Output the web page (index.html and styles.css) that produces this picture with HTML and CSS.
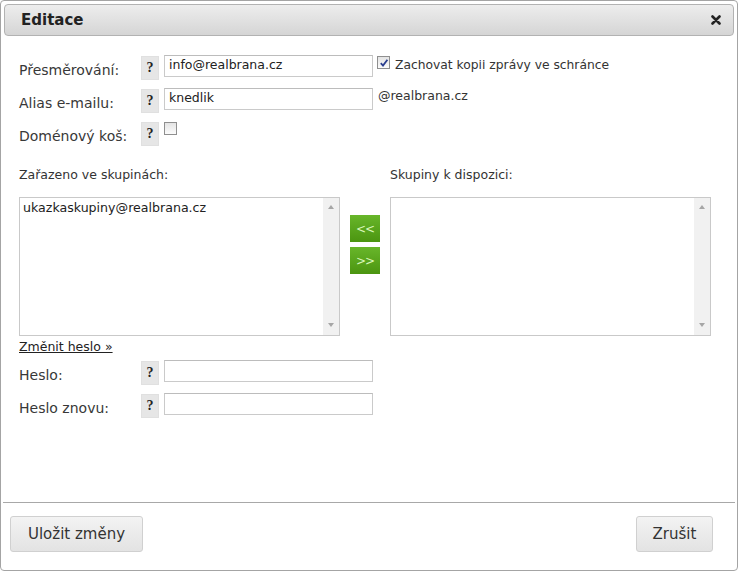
FILE: index.html
```html
<!DOCTYPE html>
<html lang="cs">
<head>
<meta charset="utf-8">
<title>Editace</title>
<link rel="stylesheet" href="styles.css">
</head>
<body>
<div class="dialog">
  <div class="titlebar">
    <span class="title">Editace</span>
    <span class="close"><svg width="10" height="10" viewBox="0 0 10 10"><path d="M1.5 1.5 L8.5 8.5 M8.5 1.5 L1.5 8.5" stroke="#222" stroke-width="2.6" stroke-linecap="round"/></svg></span>
  </div>
  <div class="content">
    <div class="row">
      <span class="label">Přesměrování:</span>
      <span class="help">?</span>
      <span class="input">info@realbrana.cz</span>
      <span class="check checked r1"><svg width="10" height="10" viewBox="0 0 10 10"><path d="M1.8 5.2 L4 7.6 L8.4 1.8" stroke="#2b3f8f" stroke-width="1.8" fill="none"/></svg></span>
      <span class="aside r1t">Zachovat kopii zprávy ve schránce</span>
    </div>
    <div class="row">
      <span class="label">Alias e-mailu:</span>
      <span class="help">?</span>
      <span class="input">knedlik</span>
      <span class="aside r2t">@realbrana.cz</span>
    </div>
    <div class="row">
      <span class="label">Doménový koš:</span>
      <span class="help">?</span>
      <span class="check r3"></span>
    </div>

    <div class="groups">
      <div class="gcol">
        <div class="glabel">Zařazeno ve skupinách:</div>
        <div class="listbox">
          <div class="items"><div class="item">ukazkaskupiny@realbrana.cz</div></div>
          <div class="scroll"><span class="arr up"></span><span class="arr down"></span></div>
        </div>
      </div>
      <div class="moves">
        <span class="move">&lt;&lt;</span>
        <span class="move">&gt;&gt;</span>
      </div>
      <div class="gcol">
        <div class="glabel">Skupiny k dispozici:</div>
        <div class="listbox">
          <div class="items"></div>
          <div class="scroll"><span class="arr up"></span><span class="arr down"></span></div>
        </div>
      </div>
    </div>

    <a class="change" href="#">Změnit heslo »</a>

    <div class="row pw">
      <span class="label">Heslo:</span>
      <span class="help">?</span>
      <span class="input"></span>
    </div>
    <div class="row">
      <span class="label">Heslo znovu:</span>
      <span class="help">?</span>
      <span class="input"></span>
    </div>
  </div>
  <div class="footer">
    <span class="btn save">Uložit změny</span>
    <span class="btn cancel">Zrušit</span>
  </div>
</div>
</body>
</html>
```
FILE: styles.css
```css
* { box-sizing: border-box; }
html, body { margin: 0; padding: 0; background: #fff; }
body { font-family: "DejaVu Sans", Verdana, sans-serif; color: #333; }

.dialog {
  width: 738px;
  height: 571px;
  border: 1px solid #a4a4a4;
  border-radius: 4px;
  display: flex;
  flex-direction: column;
  background: #fff;
}

.titlebar {
  margin: 3px 3px 0 3px;
  height: 32px;
  border: 1px solid #b2b2b2;
  border-radius: 4px;
  background: linear-gradient(#ededed, #d5d5d5);
  display: flex;
  align-items: center;
  justify-content: space-between;
  padding: 0 12px 0 16px;
}
.title { font-weight: bold; font-size: 15px; color: #222; }
.close { display: flex; }

.content {
  padding: 19px 0 0 18px;
  display: flex;
  flex-direction: column;
}

.row {
  display: flex;
  align-items: flex-start;
  height: 33px;
}
.label {
  width: 122px;
  font-size: 14px;
  line-height: 18px;
  margin-top: 6px;
  color: #383838;
}
.help {
  width: 18px;
  height: 24px;
  margin-top: 1px;
  background: #e6e6e6;
  border: 1px solid #e0e0e0;
  font-family: "Liberation Serif", serif;
  font-weight: bold;
  font-size: 14px;
  color: #222;
  display: flex;
  align-items: center;
  justify-content: center;
}
.input {
  width: 209px;
  height: 22px;
  margin-left: 5px;
  border: 1px solid #cacaca;
  border-top-color: #bcbcbc;
  font-size: 12.5px;
  line-height: 18px;
  padding: 0 0 0 4px;
  color: #222;
}
.check {
  width: 13px;
  height: 13px;
  border: 1px solid #8f8f8f;
  background: linear-gradient(#e4e4e4, #fbfbfb);
  display: flex;
  align-items: center;
  justify-content: center;
}
.check.r1 { margin: 1px 0 0 4px; }
.check.r3 { margin: 1px 0 0 5px; }
.aside { color: #333; }
.r1t { margin: 1px 0 0 5px; font-size: 12.3px; line-height: 18px; }
.r2t { margin: 0 0 0 5px; font-size: 12.5px; line-height: 16px; }

.groups {
  display: flex;
  align-items: flex-start;
  margin-top: 13px;
}
.gcol { display: flex; flex-direction: column; }
.glabel { font-size: 12.5px; line-height: 16px; height: 16px; margin-bottom: 14px; color: #333; }
.listbox {
  width: 321px;
  height: 139px;
  border: 1px solid #c9c9c9;
  display: flex;
}
.items { flex: 1; padding: 1px 0 0 3px; }
.item { font-size: 12.6px; line-height: 18px; color: #222; }
.scroll {
  width: 16px;
  background: #f1f1f1;
  display: flex;
  flex-direction: column;
  justify-content: space-between;
  align-items: center;
  padding: 7px 0 8px;
}
.arr { width: 0; height: 0; border-left: 3px solid transparent; border-right: 3px solid transparent; }
.arr.up { border-bottom: 4px solid #a6a6a6; }
.arr.down { border-top: 4px solid #a6a6a6; }

.moves {
  display: flex;
  flex-direction: column;
  gap: 5px;
  margin: 48px 10px 0 10px;
}
.move {
  width: 30px;
  height: 27px;
  background: linear-gradient(#68b62a, #4b9510);
  color: #d9f6b9;
  font-size: 12px;
  display: flex;
  align-items: center;
  justify-content: center;
  letter-spacing: -1px;
}

.change {
  font-size: 12.5px;
  line-height: 16px;
  color: #222;
  margin-top: 3px;
  align-self: flex-start;
}
.row.pw { margin-top: 5px; }

.footer {
  margin: auto 2px 0 2px;
  border-top: 1px solid #a8a8a8;
  height: 68px;
  display: flex;
  justify-content: space-between;
  align-items: flex-start;
  padding: 13px 22px 0 7px;
}
.btn {
  height: 36px;
  border: 1px solid #d0d0d0;
  border-radius: 3px;
  background: linear-gradient(#f3f3f3, #e3e3e3);
  font-size: 15px;
  color: #333;
  display: flex;
  align-items: center;
  justify-content: center;
}
.save { width: 133px; }
.cancel { width: 77px; }
```
